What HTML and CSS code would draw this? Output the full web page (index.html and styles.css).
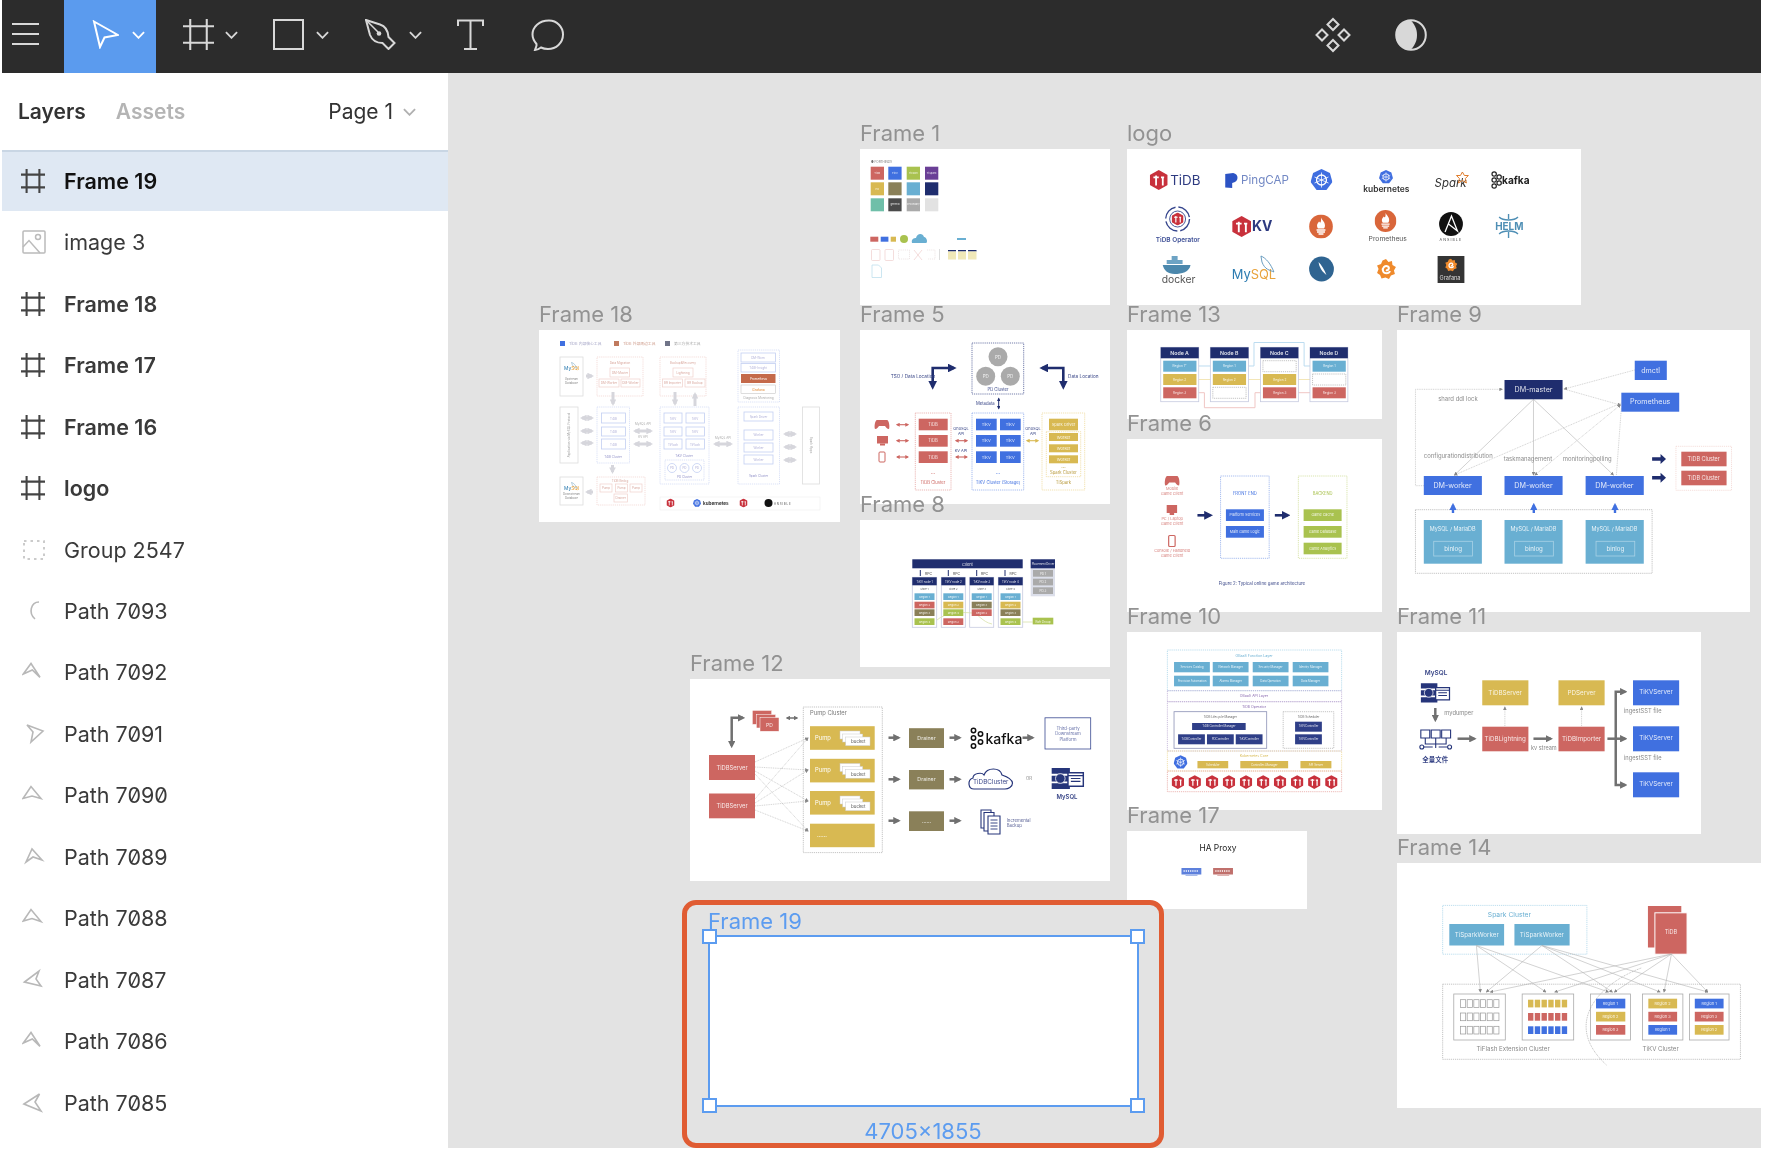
FILE: index.html
```html
<!DOCTYPE html>
<html lang="en">
<head>
  <meta charset="UTF-8" />
  <title>Figma - Layers</title>
  <link rel="stylesheet" href="styles.css">
</head>
<body>

  <!-- shared svg bits -->
  <svg class="defs" width="0" height="0">
    <defs>
      <marker id="m-navy" viewBox="0 0 10 10" refX="7" refY="5" markerWidth="3.400" markerHeight="3.400" orient="auto-start-reverse"><path d="M0 0L10 5L0 10z" fill="#1f2d6e"/></marker>
      <marker id="m-gray" viewBox="0 0 10 10" refX="7" refY="5" markerWidth="3" markerHeight="3" orient="auto-start-reverse"><path d="M0 0L10 5L0 10z" fill="#707070"/></marker>
      <marker id="m-red" viewBox="0 0 10 10" refX="7" refY="5" markerWidth="3.500" markerHeight="3.500" orient="auto-start-reverse"><path d="M0 0L10 5L0 10z" fill="#cd6661"/></marker>
      <marker id="m-yel" viewBox="0 0 10 10" refX="7" refY="5" markerWidth="3.500" markerHeight="3.500" orient="auto-start-reverse"><path d="M0 0L10 5L0 10z" fill="#d8b952"/></marker>
      <marker id="m-blue" viewBox="0 0 10 10" refX="7" refY="5" markerWidth="3" markerHeight="3" orient="auto-start-reverse"><path d="M0 0L10 5L0 10z" fill="#4070e0"/></marker>
      <marker id="m-pale" viewBox="0 0 10 10" refX="7" refY="5" markerWidth="2.200" markerHeight="2.200" orient="auto-start-reverse"><path d="M0 0L10 5L0 10z" fill="#d6d6dc"/></marker>
      <marker id="m-thin" viewBox="0 0 10 10" refX="8" refY="5" markerWidth="6" markerHeight="6" orient="auto-start-reverse"><path d="M0 0L10 5L0 10z" fill="#888"/></marker>

      <symbol id="s-frame" viewBox="0 0 30 30">
        <path d="M7 0V30M23 0V30M0 7H30M0 23H30" fill="none" stroke="currentColor"/>
      </symbol>
      <symbol id="s-chev" viewBox="0 0 14 8">
        <path d="M1 1L7 7L13 1" fill="none" stroke="currentColor" stroke-width="2"/>
      </symbol>
      <symbol id="s-hex" viewBox="0 0 20 22">
        <path d="M10 0L20 5.500V16.500L10 22L0 16.500V5.500z" fill="#c8313c"/>
        <path d="M4 8H10M7 6V17M12.500 8H16M14.500 8V17" fill="none" stroke="#fff" stroke-width="2"/>
      </symbol>
      <symbol id="s-k8s" viewBox="0 0 22 22">
        <path d="M11 0L19.500 4L22 13L16 21H6L0 13L2.500 4z" fill="#3f6ee0"/>
        <circle cx="11" cy="11" r="5" fill="none" stroke="#fff" stroke-width="1.300"/>
        <path d="M11 3.500V18.500M4 8L18 14M18 8L4 14" stroke="#fff" stroke-width=".8"/>
      </symbol>
      <symbol id="s-flame" viewBox="0 0 24 24">
        <circle cx="12" cy="12" r="12" fill="#d9663a"/>
        <path d="M12 3C13 6 16 7 16 11C16 13 15 14 15 14H9C9 14 8 13 8 11C8 9 9.500 8 10 7C11 8 11 8 11.500 8C12.500 6 12 4 12 3z" fill="#fff"/>
        <path d="M7.500 15.500H16.500M8 17.500H16M9.500 19.500H14.500" stroke="#fff" stroke-width="1.300"/>
      </symbol>
      <symbol id="s-swirl" viewBox="0 0 20 22">
        <path d="M10 1L12.500 4L16 3L16.500 7L20 9L18 12.500L19 16L15 17.500L13 21L9.500 19.500L5.500 20.500L4 17L1 15L2.500 11L1 7.500L5 6L6.500 2.500z" fill="#ef8a2c"/>
        <path d="M14 13C13 16 8 16 7 13C6 10 9 7 12 8.500C14 10 12 13 10 12" fill="none" stroke="#fff" stroke-width="2"/>
      </symbol>
      <symbol id="s-rack" viewBox="0 0 35 24">
        <path d="M1 1H20V7H1zM1 9H20V15H1zM1 17H20V23H1z" fill="#26357a"/>
        <path d="M18 6H34V20H18z" fill="#fff" stroke="#26357a" stroke-width="1.500"/>
        <path d="M18 9H34M21 12H31M21 15H31" stroke="#26357a" stroke-width="1.200"/>
        <circle cx="10" cy="12" r="5" fill="#26357a" stroke="#fff" stroke-width=".8"/>
      </symbol>
      <symbol id="s-mysql" viewBox="0 0 20 11">
        <path d="M10 0C13 1 16 4 17 8C15 7 12 6 11 3z" fill="none" stroke="#5b93b8" stroke-width=".6"/>
        <text x="0" y="10" font-size="6.500"><tspan fill="#2d7cb1">My</tspan><tspan fill="#e8a33d">SQL</tspan></text>
      </symbol>
    </defs>
  </svg>

  <div class="app">

    <!-- top bar -->
    <header class="toolbar">
      <button class="menu-btn">
        <svg class="ic" width="27" height="22" viewBox="0 0 27 22"><path d="M0 1H27M0 11H27M0 21H27" fill="none" stroke="currentColor" stroke-width="2"/></svg>
      </button>
      <button class="select-btn">
        <svg class="ic" width="27" height="29" viewBox="0 0 27 29"><path d="M2 1.500L26 15L12.500 17.500L8 27z" fill="none" stroke="currentColor" stroke-width="2"/></svg>
        <svg class="chev" width="13" height="8"><use href="#s-chev"/></svg>
      </button>
      <button class="tool tool-frame">
        <svg class="ic" width="31" height="31"><use href="#s-frame"/></svg>
        <svg class="chev" width="13" height="8"><use href="#s-chev"/></svg>
      </button>
      <button class="tool">
        <svg class="ic" width="31" height="31" viewBox="0 0 31 31"><rect x="1" y="1" width="29" height="29" fill="none" stroke="currentColor" stroke-width="2"/></svg>
        <svg class="chev" width="13" height="8"><use href="#s-chev"/></svg>
      </button>
      <button class="tool tool-pen">
        <svg class="ic" width="31" height="31" viewBox="0 0 31 31">
          <path d="M1 1L15 5.500C20 7 23 12 23.500 18L29.500 24L23.500 30L17.500 24C11 24 7 21 5 16z" fill="none" stroke="currentColor" stroke-width="2"/>
          <path d="M1 1L13 13" stroke="currentColor" stroke-width="1.500"/>
          <circle cx="14" cy="14.500" r="2.300" fill="currentColor"/>
        </svg>
        <svg class="chev" width="13" height="8"><use href="#s-chev"/></svg>
      </button>
      <button class="tool-plain">
        <svg class="ic" width="27" height="31" viewBox="0 0 27 31"><path d="M1 7V1.500H26V7M13.500 1.500V30M7 30H20" fill="none" stroke="currentColor" stroke-width="2"/></svg>
      </button>
      <button class="tool-plain tool-comment">
        <svg class="ic" width="35" height="32" viewBox="0 0 35 32"><path d="M5 31C6 28 7 27 6.500 25C4 22 2.500 19 2.500 15.500C2.500 8 9 1.500 19 1.500C27 1.500 33 8 33 15.500C33 24 26 30 18 30C15 30 13 29.500 11 28.500C9 30 7 31 5 31z" fill="none" stroke="currentColor" stroke-width="2"/></svg>
      </button>
      <div class="toolbar-right">
        <svg class="ic" width="36" height="36" viewBox="0 0 36 36">
          <path d="M18 2L23.500 7.500L18 13L12.500 7.500zM7 12.500L12.500 18L7 23.500L1.500 18zM29 12.500L34.500 18L29 23.500L23.500 18zM18 23L23.500 28.500L18 34L12.500 28.500z" fill="none" stroke="currentColor" stroke-width="2"/>
        </svg>
        <svg class="ic" width="32" height="32" viewBox="0 0 32 32">
          <circle cx="16" cy="16" r="14.800" fill="none" stroke="currentColor" stroke-width="2"/>
          <path d="M16 1.500C4 1.500 1 10 1 16C1 22 4 30.500 16 30.500C21 25 22 20 22 16C22 12 21 7 16 1.500z" fill="currentColor"/>
        </svg>
      </div>
    </header>

    <div class="workspace">

      <!-- layers panel -->
      <aside class="sidebar">
        <div class="tabs">
          <span class="tab tab-on">Layers</span>
          <span class="tab">Assets</span>
          <span class="page-pick">Page 1
            <svg width="13" height="8"><use href="#s-chev"/></svg>
          </span>
        </div>
        <ul class="layers">
          <li class="layer is-selected"><svg class="layer-ic frame-ic"><use href="#s-frame"/></svg>Frame 19</li>
          <li class="layer"><svg class="layer-ic" viewBox="0 0 24 24"><rect x="1" y="1" width="22" height="22" rx="1" fill="none" stroke="#bbb" stroke-width="1.500"/><circle cx="16" cy="7" r="2.500" fill="none" stroke="#bbb" stroke-width="1.500"/><path d="M1 17L7 10.500L18 23" fill="none" stroke="#bbb" stroke-width="1.500"/></svg>image 3</li>
          <li class="layer is-bold"><svg class="layer-ic frame-ic"><use href="#s-frame"/></svg>Frame 18</li>
          <li class="layer is-bold"><svg class="layer-ic frame-ic"><use href="#s-frame"/></svg>Frame 17</li>
          <li class="layer is-bold"><svg class="layer-ic frame-ic"><use href="#s-frame"/></svg>Frame 16</li>
          <li class="layer is-bold"><svg class="layer-ic frame-ic"><use href="#s-frame"/></svg>logo</li>
          <li class="layer"><svg class="layer-ic" viewBox="0 0 24 24"><rect x="2" y="3" width="20" height="18" fill="none" stroke="#bbb" stroke-width="1.500" stroke-dasharray="2.500 4"/></svg>Group 2547</li>
          <li class="layer"><svg class="layer-ic" viewBox="0 0 24 24"><path d="M17 3C9 3 6 14 13 20" class="p-ic"/></svg>Path 7093</li>
          <li class="layer"><svg class="layer-ic" viewBox="0 0 24 24"><path d="M1.300 14L9 3.500L18 17.300L10.300 10z" class="p-ic"/></svg>Path 7092</li>
          <li class="layer"><svg class="layer-ic" viewBox="0 0 24 24"><path d="M5 3L21 9L9 20L11 10z" class="p-ic"/></svg>Path 7091</li>
          <li class="layer"><svg class="layer-ic" viewBox="0 0 24 24"><path d="M1 15.500L9 3.500L19 15.500L10 13z" class="p-ic"/></svg>Path 7090</li>
          <li class="layer"><svg class="layer-ic" viewBox="0 0 24 24"><path d="M4 17L10 4L20 15L11 12z" class="p-ic"/></svg>Path 7089</li>
          <li class="layer"><svg class="layer-ic" viewBox="0 0 24 24"><path d="M1.300 15L9 3.500L19 15.500L10 12.500z" class="p-ic"/></svg>Path 7088</li>
          <li class="layer"><svg class="layer-ic" viewBox="0 0 24 24"><path d="M2.500 14L17 3L14 11L19 18z" class="p-ic"/></svg>Path 7087</li>
          <li class="layer"><svg class="layer-ic" viewBox="0 0 24 24"><path d="M1.300 14L9 3.500L18 17.300L10.300 10z" class="p-ic"/></svg>Path 7086</li>
          <li class="layer"><svg class="layer-ic" viewBox="0 0 24 24"><path d="M2 13L17.500 3L13 11L19 20z" class="p-ic"/></svg>Path 7085</li>
        </ul>
      </aside>

      <!-- canvas, frames sit where the user dropped them -->
      <main class="canvas">

        <section class="frame f1">
          <span class="frame-name">Frame 1</span>
          <svg class="thumb" preserveAspectRatio="none" viewBox="860 149 250 156">
            <text x="871" y="163" font-size="3" fill="#777">● FORTHINGS</text>
            <rect class="red" x="870.700" y="166.700" width="13.300" height="13"/><rect class="blue" x="888.300" y="166.700" width="13.300" height="13"/><rect class="grn" x="906.700" y="166.700" width="13.300" height="13"/><rect class="pur" x="925" y="166.700" width="13.300" height="13"/>
            <rect class="yel" x="870.700" y="182.300" width="13.300" height="13"/><rect class="olv" x="888.300" y="182.300" width="13.300" height="13"/><rect class="teal" x="906.700" y="182.300" width="13.300" height="13"/><rect class="navy" x="925" y="182.300" width="13.300" height="13"/>
            <rect class="mint" x="870.700" y="198.300" width="13.300" height="13"/><rect class="dark" x="888.300" y="198.300" width="13.300" height="13"/><rect class="gray" x="906.700" y="198.300" width="13.300" height="13"/><rect class="lgray" x="925" y="198.300" width="13.300" height="13"/>
            <g class="tw" font-size="2.600"><text x="877.300" y="174">TiDB</text><text x="895" y="174">TiKV</text><text x="913.300" y="174">TiFlash</text><text x="931.600" y="174">TiSpark</text><text x="877.300" y="189.500">PD</text><text x="895" y="205">general</text><text x="913.300" y="205">secondary</text></g>
            <rect class="red" x="870.300" y="236.700" width="8" height="5"/><rect class="blue" x="880.700" y="236.700" width="7.700" height="5"/><rect class="yel" x="890.700" y="236.700" width="5.300" height="5"/>
            <circle class="grn" cx="904" cy="239" r="4"/>
            <path class="teal" d="M912 243C911 239 914 238 916 238C917 233 923 233 924 237C927 237 928 243 926 243z"/>
            <rect class="teal" x="957" y="238" width="9" height="2"/>
            <g class="pale-red">
              <rect x="871.500" y="249.500" width="8.500" height="11" rx="1"/><rect x="885" y="249.500" width="8.500" height="11" rx="1"/>
              <path d="M914 250L922 260M922 250L914 260"/>
            </g>
            <rect class="d-pale" x="898.500" y="250" width="11" height="9"/>
            <path class="d-pale" d="M927 250H935V259H928"/>
            <path d="M939.500 249V260" stroke="#ddd"/>
            <g>
              <rect class="navy" x="948" y="250" width="8" height="1.500"/><rect class="navy" x="958" y="250" width="8" height="1.500"/><rect class="navy" x="968" y="250" width="8.500" height="1.500"/>
              <rect x="948" y="251.500" width="8" height="8" fill="#f0e8b8"/><rect x="958" y="251.500" width="8" height="8" fill="#f0e8b8"/><rect x="968" y="251.500" width="8.500" height="8" fill="#f0e8b8"/>
            </g>
            <path d="M872 265H878.500L881.500 268V277.500H872z" fill="none" stroke="#bfe0ee" stroke-width=".8"/>
          </svg>
        </section>

        <section class="frame f-logo">
          <span class="frame-name">logo</span>
          <svg class="thumb" preserveAspectRatio="none" viewBox="1127 149 457 156">
            <use href="#s-hex" x="1150" y="170" width="18" height="20"/>
            <text class="logo-navy" x="1170.500" y="185" font-size="13.500">TiDB</text>
            <path d="M1226 174L1234 173C1240 174 1240 182 1233 183V188L1226 187.500z" fill="#2c53c4"/>
            <text x="1242" y="184.500" font-size="11.700" fill="#7288c4">PingCAP</text>
            <use href="#s-k8s" x="1312" y="169" width="22" height="22"/>
            <use href="#s-k8s" x="1381" y="170" width="14" height="14"/>
            <text x="1365" y="192" font-size="8.500" font-weight="600" fill="#333">kubernetes</text>
            <text x="1437" y="187" font-size="11.500" font-style="italic" fill="#333">Spark</text>
            <path d="M1465 172L1467 175.500L1471 175.500L1468 178.500L1469 183L1465 180.500L1461 183L1462 178.500L1459 175.500L1463 175.500z" fill="none" stroke="#e07b2a"/>
            <g fill="none" stroke="#222" stroke-width="1.200"><circle cx="1497" cy="174" r="2.200"/><circle cx="1497" cy="180" r="2.200"/><circle cx="1497" cy="186" r="2.200"/><circle cx="1502" cy="177" r="2.200"/><circle cx="1502" cy="183" r="2.200"/></g>
            <text x="1505" y="184" font-size="10.200" font-weight="700" fill="#222">kafka</text>

            <circle cx="1178" cy="219" r="12" fill="none" stroke="#35458d" stroke-width="1.400" stroke-dasharray="16 3"/>
            <circle cx="1178" cy="219" r="8" fill="none" stroke="#35458d" stroke-width=".9"/>
            <use href="#s-hex" x="1172" y="212.500" width="12" height="13"/>
            <text x="1156" y="242" font-size="6.500" font-weight="600" fill="#3d4f96">TiDB Operator</text>
            <use href="#s-hex" x="1233" y="216" width="19" height="21"/>
            <text class="logo-navy" x="1253" y="231.500" font-size="14" font-weight="700">KV</text>
            <use href="#s-flame" x="1310.500" y="214.500" width="24" height="24"/>
            <use href="#s-flame" x="1376.500" y="210" width="22" height="22"/>
            <text x="1370.500" y="241" font-size="6.800" fill="#555">Prometheus</text>
            <circle cx="1453.500" cy="224" r="12" fill="#111"/>
            <path d="M1447.500 232L1454 216L1460 231L1451 224" fill="none" stroke="#fff" stroke-width="1.300"/>
            <text x="1442" y="241.500" font-size="3.800" letter-spacing="1" fill="#444">ANSIBLE</text>
            <text x="1498" y="230.500" font-size="10" font-weight="700" fill="#4f8fb5">HELM</text>
            <path d="M1502 217C1506 221 1517 221 1521 217M1511.500 214V219M1502 234C1506 230 1517 230 1521 234M1511.500 232V238" fill="none" stroke="#4f8fb5" stroke-width="1.400"/>

            <path d="M1163 265H1191C1190 272 1182 274 1175 274C1168 274 1164 270 1163 265z" fill="#4c88ad"/>
            <path d="M1167 260H1183V264H1167zM1172 256H1178V260H1172z" fill="#6da3c4"/>
            <text x="1162" y="283" font-size="10.400" fill="#555">docker</text>
            <text x="1232.500" y="279" font-size="13"><tspan fill="#2d7cb1">My</tspan><tspan fill="#e8a33d">SQL</tspan></text>
            <path d="M1262 256C1267 258 1272 264 1275 272C1271 270 1266 270 1263 262z" fill="none" stroke="#5b93b8" stroke-width=".9"/>
            <circle cx="1323" cy="269" r="12.500" fill="#2f6491"/>
            <path d="M1320 262C1323 265 1326 270 1328 275C1324 272 1321 268 1320 262z" fill="#fff"/>
            <use href="#s-swirl" x="1378" y="257" width="20" height="24"/>
            <rect x="1440" y="256" width="27" height="27" fill="#343434"/>
            <use href="#s-swirl" x="1447" y="258" width="13" height="14"/>
            <text x="1442" y="280" font-size="5.600" fill="#ddd">Grafana</text>
          </svg>
        </section>

        <section class="frame f18">
          <span class="frame-name">Frame 18</span>
          <svg class="thumb" preserveAspectRatio="none" viewBox="539 330 301 192">
            <rect class="blue" x="560" y="341" width="5" height="5"/><rect fill="#c07a5e" x="614" y="341" width="5" height="5"/><rect fill="#707488" x="665" y="341" width="5" height="5"/>
            <g font-size="3.800" fill="#a8a8c8"><text x="569" y="345">TiDB 内部核心工具</text><text x="623" y="345" fill="#d0a090">TiDB 外部周边工具</text><text x="674" y="345" fill="#aaa">第三方技术工具</text></g>

            <g class="b-gray">
              <rect x="560" y="357" width="23" height="39"/><rect x="560" y="407" width="18" height="56"/><rect x="560" y="477" width="23" height="28"/><rect x="802.500" y="407" width="17" height="77"/>
            </g>
            <use href="#s-mysql" x="564" y="362" width="15" height="9"/>
            <use href="#s-mysql" x="564" y="482" width="15" height="9"/>
            <g class="tm" font-size="2.900" fill="#888"><text x="571.500" y="380">Upstream</text><text x="571.500" y="384">Database</text><text x="571.500" y="494.500">Downstream</text><text x="571.500" y="498.500">Database</text></g>
            <text class="tm" font-size="3" fill="#999" transform="rotate(-90 569 435)" x="569" y="436">Application via MySQL Protocol</text>
            <text class="tm" font-size="3" fill="#999" transform="rotate(90 811 445)" x="811" y="446">Spark Apps</text>
            <g class="d-rose">
              <rect x="597" y="357" width="46" height="39"/><rect x="660" y="357" width="46" height="39"/><rect x="597" y="477" width="48" height="28"/>
            </g>
            <g class="b-rose">
              <rect x="610" y="368" width="19.500" height="9"/><rect x="599" y="379" width="20" height="8"/><rect x="621" y="379" width="19" height="8"/>
              <rect x="673" y="368" width="20" height="9"/><rect x="662.500" y="379" width="20" height="8"/><rect x="685" y="379" width="20" height="8"/>
              <rect x="600" y="484" width="12" height="8"/><rect x="615.500" y="484" width="12" height="8"/><rect x="630" y="484" width="12" height="8"/><rect x="614" y="494" width="13.500" height="8"/>
            </g>
            <g class="tm" font-size="3" fill="#d8a69c"><text x="620" y="363.500">Data Migration</text><text x="683" y="363.500">Backup&amp;Recovery</text><text x="620" y="481.500">TiDB Binlog</text><text x="620" y="373.500">DM-Master</text><text x="609" y="384">DM-Worker</text><text x="630.500" y="384">DM-Worker</text><text x="683" y="373.500">Lightning</text><text x="672.500" y="384">BR Importer</text><text x="695" y="384">BR Backup</text><text x="606" y="489">Pump</text><text x="621.500" y="489">Pump</text><text x="636" y="489">Pump</text><text x="620.700" y="499">Drainer</text></g>
            <g class="d-sky">
              <rect x="597" y="407" width="32.500" height="56"/><rect x="660" y="407" width="49" height="77"/><rect x="665" y="460" width="39" height="20"/><rect x="738" y="350" width="41.500" height="52"/><rect x="738" y="407" width="41.500" height="77"/>
            </g>
            <g class="b-sky">
              <rect x="601.500" y="413" width="24" height="10"/><rect x="601.500" y="427" width="24" height="9"/><rect x="601.500" y="439" width="24" height="10"/>
              <rect x="664" y="413" width="18" height="10"/><rect x="686" y="413" width="18.500" height="10"/><rect x="664" y="427" width="18" height="9"/><rect x="686" y="427" width="18.500" height="9"/><rect x="664" y="439" width="18" height="10"/><rect x="686" y="439" width="18.500" height="10"/>
              <circle cx="672" cy="468" r="4.500"/><circle cx="684.500" cy="468" r="4.500"/><circle cx="697" cy="468" r="4.500"/>
              <rect x="741" y="353" width="34.500" height="9"/><rect x="741" y="363.500" width="34.500" height="8.500"/>
              <rect x="744" y="412" width="29" height="9"/><rect x="744" y="430" width="29" height="10"/><rect x="744" y="443" width="29" height="9"/><rect x="744" y="455" width="29" height="9"/>
            </g>
            <rect x="741" y="374" width="34.500" height="9" fill="#c4694a"/>
            <rect x="741" y="385" width="34.500" height="8.500" fill="#fff" stroke="#bbb" stroke-width=".5"/>
            <g font-size="3" fill="#b0b0d8" text-anchor="middle"><text x="613.500" y="420">TiDB</text><text x="613.500" y="433">TiDB</text><text x="613.500" y="446">TiDB</text><text x="673" y="420">TiKV</text><text x="695" y="420">TiKV</text><text x="673" y="433">TiKV</text><text x="695" y="433">TiKV</text><text x="673" y="446">TiFlash</text><text x="695" y="446">TiFlash</text><text x="758.500" y="417.500">Spark Driver</text><text x="758.500" y="436">Worker</text><text x="758.500" y="449">Worker</text><text x="758.500" y="461">Worker</text><text x="758" y="359">DM-Worn</text><text x="758" y="369">TiDB-Insight</text><text x="613" y="458" fill="#9090c8">TiDB Cluster</text><text x="684" y="457" fill="#9090c8">TiKV Cluster</text><text x="758.500" y="477" fill="#9090c8">Spark Cluster</text><text x="684.500" y="477.500" fill="#9090c8">PD Cluster</text><text x="758.500" y="399" fill="#aaa">Diagnosis Monitoring</text><text x="672" y="469">PD</text><text x="684.500" y="469">PD</text><text x="697" y="469">PD</text></g>
            <g class="tm" font-size="3" fill="#aaa"><text x="643" y="425">MySQL API</text><text x="643" y="438">KV API</text><text x="723" y="439">MySQL API</text></g>
            <text x="758.500" y="380" font-size="3" fill="#fff" text-anchor="middle">Prometheus</text>
            <text x="758.500" y="391" font-size="3.300" fill="#e08a38" text-anchor="middle">Grafana</text>
            <g class="ar-pale">
              <path d="M613 392V404" marker-end="url(#m-pale)"/><path d="M675 392V404" marker-end="url(#m-pale)"/><path d="M695 406V394" marker-end="url(#m-pale)"/><path d="M612.500 465V472" marker-end="url(#m-pale)"/>
              <path d="M582 418H592" marker-start="url(#m-pale)" marker-end="url(#m-pale)"/><path d="M582 431H592" marker-start="url(#m-pale)" marker-end="url(#m-pale)"/><path d="M582 443H592" marker-start="url(#m-pale)" marker-end="url(#m-pale)"/>
              <path d="M635 431H651" marker-start="url(#m-pale)" marker-end="url(#m-pale)"/><path d="M635 444H651" marker-start="url(#m-pale)" marker-end="url(#m-pale)"/><path d="M715 444H731" marker-start="url(#m-pale)" marker-end="url(#m-pale)"/>
              <path d="M785 434H795" marker-start="url(#m-pale)" marker-end="url(#m-pale)"/><path d="M785 447H795" marker-start="url(#m-pale)" marker-end="url(#m-pale)"/><path d="M785 460H795" marker-start="url(#m-pale)" marker-end="url(#m-pale)"/>
              <path d="M593 492H587" marker-end="url(#m-pale)"/><path d="M586 376H592" marker-end="url(#m-pale)"/>
            </g>
            <rect x="660" y="497" width="160" height="13" fill="none" stroke="#eee" stroke-width=".6"/>
            <use href="#s-hex" x="666.500" y="498.500" width="8" height="9"/>
            <use href="#s-k8s" x="693" y="499" width="8" height="8"/>
            <text x="703" y="505" font-size="4.600" font-weight="700" fill="#333">kubernetes</text>
            <use href="#s-hex" x="739.500" y="498.500" width="8" height="9"/>
            <circle cx="768.500" cy="503" r="4" fill="#111"/>
            <text x="774" y="505" font-size="3" letter-spacing=".7" fill="#555">ANSIBLE</text>
          </svg>
        </section>

        <section class="frame f5">
          <span class="frame-name">Frame 5</span>
          <svg class="thumb" preserveAspectRatio="none" viewBox="860 330 250 174">
            <rect class="d-navy" x="972" y="343" width="51.700" height="51"/>
            <circle class="gray" cx="998" cy="356.700" r="9.500"/><circle class="gray" cx="985.700" cy="376.300" r="9.500"/><circle class="gray" cx="1010.300" cy="376.300" r="9.500"/>
            <g class="tw" font-size="4.500"><text x="998" y="358.500">PD</text><text x="985.700" y="378">PD</text><text x="1010.300" y="378">PD</text></g>
            <text class="tm t-navy" x="998" y="390.500" font-size="4.200">PD Cluster</text>
            <path class="ln-navy" d="M932.700 387V368H954" marker-start="url(#m-navy)" marker-end="url(#m-navy)"/>
            <path class="ln-navy" d="M1063.300 387V368H1042" marker-start="url(#m-navy)" marker-end="url(#m-navy)"/>
            <text class="t-navy" x="890.700" y="378" font-size="4.700">TSO / Data Location</text>
            <text class="t-navy" x="1068" y="378" font-size="4.700">Data Location</text>
            <text class="t-navy" x="976" y="404.500" font-size="4.200">Metadata</text>
            <path d="M998.700 398.500V408.500" stroke="#1f2d6e" stroke-width="1" marker-start="url(#m-navy)" marker-end="url(#m-navy)"/>

            <rect class="d-red" x="915.300" y="413" width="35.700" height="77"/>
            <rect class="red" x="918.700" y="418.700" width="29" height="11.600"/><rect class="red" x="918.700" y="435" width="29" height="11.700"/><rect class="red" x="918.700" y="451.300" width="29" height="11.700"/>
            <g class="tw" font-size="4.200"><text x="933" y="426">TiDB</text><text x="933" y="442">TiDB</text><text x="933" y="458.500">TiDB</text></g>
            <text class="tm t-red" x="933" y="474" font-size="5">...</text>
            <text class="tm t-red" x="933" y="484" font-size="4.200">TiDB Cluster</text>
            <g class="red-icons">
              <path d="M877 420H887C889 420 890 427 889 429C887 429 886 427 885 426H879C878 427 877 429 875 429C874 427 875 420 877 420z"/>
              <rect x="877" y="436" width="11" height="7.500"/><rect x="880" y="443.500" width="5" height="2"/>
              <rect x="879" y="452" width="6" height="10" rx="1" fill="#fff" stroke="#cd6661" stroke-width="1"/>
            </g>
            <g class="ar-red">
              <path d="M897 424.700H908" marker-start="url(#m-red)" marker-end="url(#m-red)"/><path d="M897 440.700H908" marker-start="url(#m-red)" marker-end="url(#m-red)"/><path d="M897 457H908" marker-start="url(#m-red)" marker-end="url(#m-red)"/>
              <path d="M956 440.700H967" marker-start="url(#m-red)" marker-end="url(#m-red)"/><path d="M956 457H967" marker-start="url(#m-red)" marker-end="url(#m-red)"/>
            </g>
            <g class="tm t-navy" font-size="3.900"><text x="961" y="429.500">OnoSQL</text><text x="961" y="434.500">API</text><text x="961" y="451.500">KV API</text><text x="1033" y="429.500">OnoSQL</text><text x="1033" y="434.500">API</text></g>

            <rect class="d-blue" x="972" y="413" width="51.700" height="77"/>
            <g class="blue">
              <rect x="976" y="418.700" width="20.700" height="11.600"/><rect x="1000" y="418.700" width="20.700" height="11.600"/><rect x="976" y="435" width="20.700" height="11.700"/><rect x="1000" y="435" width="20.700" height="11.700"/><rect x="976" y="451.300" width="20.700" height="11.700"/><rect x="1000" y="451.300" width="20.700" height="11.700"/>
            </g>
            <g class="tw" font-size="4"><text x="986.300" y="426">TiKV</text><text x="1010.300" y="426">TiKV</text><text x="986.300" y="442">TiKV</text><text x="1010.300" y="442">TiKV</text><text x="986.300" y="458.500">TiKV</text><text x="1010.300" y="458.500">TiKV</text></g>
            <text class="tm t-blue" x="998" y="474" font-size="5">...</text>
            <text class="tm t-blue" x="998" y="484" font-size="4.200">TiKV Cluster (Storage)</text>
            <path class="ar-yel" d="M1027 440.700H1038" marker-start="url(#m-yel)" marker-end="url(#m-yel)"/>

            <rect class="d-yel" x="1042" y="413" width="42.700" height="77"/>
            <rect class="yel" x="1049" y="418.700" width="29" height="11.600"/>
            <rect class="d-yel" x="1046.300" y="431.700" width="34.400" height="45"/>
            <rect class="yel" x="1049" y="433" width="29" height="8"/><rect class="yel" x="1049" y="444.300" width="29" height="8"/><rect class="yel" x="1049" y="455.300" width="29" height="8"/>
            <g class="tw" font-size="4"><text x="1063.500" y="426">Spark Driver</text><text x="1063.500" y="438.500">Worker</text><text x="1063.500" y="450">Worker</text><text x="1063.500" y="461">Worker</text></g>
            <text class="tm t-gold" x="1063.500" y="468" font-size="5">...</text>
            <text class="tm t-gold" x="1063.500" y="473.500" font-size="4.200">Spark Cluster</text>
            <text class="tm t-gold" x="1063.500" y="484" font-size="4.200">TiSpark</text>
          </svg>
        </section>

        <section class="frame f8">
          <span class="frame-name">Frame 8</span>
          <svg class="thumb" preserveAspectRatio="none" viewBox="860 520 250 147">
            <rect class="navy" x="912.300" y="559.300" width="110.400" height="9"/>
            <text class="tw" x="967.500" y="565.500" font-size="4">Client</text>
            <rect x="1030.700" y="559.300" width="24.300" height="37" fill="#dcdfea"/>
            <rect class="navy" x="1030.700" y="559.300" width="24.300" height="9"/>
            <text class="tw" x="1043" y="565" font-size="2.800">Placement Driver</text>
            <rect class="gray" x="1033" y="570" width="20" height="6.700"/><rect class="gray" x="1033" y="578.700" width="20" height="6.700"/><rect class="gray" x="1033" y="587.300" width="20" height="6.700"/>
            <g class="tw" font-size="3"><text x="1043" y="574.500">PD 1</text><text x="1043" y="583">PD 2</text><text x="1043" y="592">PD 3</text></g>
            <path d="M920.300 570V576M948.300 570V576M976.700 570V576M1005 570V576" stroke="#1f2d6e"/>
            <g font-size="3.500" fill="#444"><text x="925" y="574.500">RPC</text><text x="953" y="574.500">RPC</text><text x="981" y="574.500">RPC</text><text x="1009.500" y="574.500">RPC</text></g>
            <g class="node">
              <rect x="912.300" y="577.300" width="24.400" height="50"/><rect x="941.300" y="577.300" width="24" height="50"/><rect x="969.700" y="577.300" width="24" height="50"/><rect x="998.300" y="577.300" width="24.400" height="50"/>
            </g>
            <rect class="navy" x="912.300" y="577.300" width="24.400" height="8"/><rect class="navy" x="941.300" y="577.300" width="24" height="8"/><rect class="navy" x="969.700" y="577.300" width="24" height="8"/><rect class="navy" x="998.300" y="577.300" width="24.400" height="8"/>
            <g class="tw" font-size="2.900"><text x="924.500" y="582.500">TiKV node 1</text><text x="953.300" y="582.500">TiKV node 2</text><text x="981.700" y="582.500">TiKV node 3</text><text x="1010.500" y="582.500">TiKV node 4</text></g>
            <g class="tm" font-size="2.600" fill="#555"><text x="924.500" y="590">Store 1</text><text x="953.300" y="590">Store 2</text><text x="981.700" y="590">Store 3</text><text x="1010.500" y="590">Store 4</text></g>
            <path d="M937 620C946 612 962 612 972 613C978 613 982 622 992 624" class="ln-green"/>
            <path d="M1022.700 622H1032.700" class="ln-green"/>
            <rect class="teal" x="914.500" y="593.300" width="20" height="6.700"/><rect class="red" x="914.500" y="601.700" width="20" height="6.700"/><rect class="olv" x="914.500" y="609.300" width="20" height="6.700"/><rect class="grn" x="914.500" y="618.300" width="20" height="6.700"/>
            <rect class="teal" x="943.300" y="593.300" width="20" height="6.700"/><rect class="yel" x="943.300" y="601.700" width="20" height="6.700"/><rect class="grn" x="943.300" y="609.300" width="20" height="6.700"/><rect class="red" x="943.300" y="618.300" width="20" height="6.700"/>
            <rect class="teal" x="971.700" y="593.300" width="20" height="6.700"/><rect class="olv" x="971.700" y="601.700" width="20" height="6.700"/><rect class="red" x="971.700" y="609.300" width="20" height="6.700"/>
            <rect class="teal" x="1000.500" y="593.300" width="20" height="6.700"/><rect class="yel" x="1000.500" y="601.700" width="20" height="6.700"/><rect class="olv" x="1000.500" y="609.300" width="20" height="6.700"/><rect class="grn" x="1000.500" y="618.300" width="20" height="6.700"/>
            <g class="tw" font-size="2.700"><text x="924.500" y="598">Region 1</text><text x="924.500" y="606">Region 2</text><text x="924.500" y="614">Region 3</text><text x="924.500" y="623">Region 4</text><text x="953.300" y="598">Region 1</text><text x="953.300" y="606">Region 2</text><text x="953.300" y="614">Region 4</text><text x="953.300" y="623">Region 2</text><text x="981.700" y="598">Region 1</text><text x="981.700" y="606">Region 3</text><text x="981.700" y="614">Region 2</text><text x="1010.500" y="598">Region 1</text><text x="1010.500" y="606">Region 2</text><text x="1010.500" y="614">Region 3</text><text x="1010.500" y="623">Region 4</text></g>
            <rect class="grn" x="1032.700" y="617.700" width="20.600" height="6.700"/>
            <text class="tw" x="1043" y="622.500" font-size="3">Raft Group</text>
          </svg>
        </section>

        <section class="frame f13">
          <span class="frame-name">Frame 13</span>
          <svg class="thumb" preserveAspectRatio="none" viewBox="1127 330 257 89">
            <path d="M1170 366H1230M1240 366H1255V342.500H1305.500V366H1325" fill="none" stroke="#bcdcf0" stroke-width="1"/>
            <path d="M1170 379.500H1340" fill="none" stroke="#f3e6b8" stroke-width="1"/>
            <path d="M1190 392.700H1205V407.700H1256V392.700H1330" fill="none" stroke="#f0c6c4" stroke-width="1"/>
            <g class="node">
              <rect x="1161" y="347.300" width="38.300" height="54.400"/><rect x="1211" y="347.300" width="38.500" height="54.400"/><rect x="1261.500" y="347.300" width="38.200" height="54.400"/><rect x="1311.400" y="347.300" width="38.200" height="54.400"/>
            </g>
            <rect class="navy" x="1161" y="347.300" width="38.300" height="11"/><rect class="navy" x="1211" y="347.300" width="38.500" height="11"/><rect class="navy" x="1261.500" y="347.300" width="38.200" height="11"/><rect class="navy" x="1311.400" y="347.300" width="38.200" height="11"/>
            <g class="tw" font-size="5.300" font-weight="600"><text x="1180" y="355">Node A</text><text x="1230" y="355">Node B</text><text x="1280.500" y="355">Node C</text><text x="1330.500" y="355">Node D</text></g>
            <rect class="teal" x="1163.500" y="360.700" width="33.500" height="11"/><rect class="yel" x="1163.500" y="374" width="33.500" height="11"/><rect class="red" x="1163.500" y="387.300" width="33.500" height="11"/>
            <rect class="teal" x="1213.500" y="360.700" width="33.500" height="11"/><rect class="yel" x="1213.500" y="374" width="33.500" height="11"/><rect class="d-gray" x="1213.500" y="387.300" width="33.500" height="11"/>
            <rect class="d-gray" x="1264" y="360.700" width="33.500" height="11"/><rect class="yel" x="1264" y="374" width="33.500" height="11"/><rect class="red" x="1264" y="387.300" width="33.500" height="11"/>
            <rect class="teal" x="1314" y="360.700" width="33.500" height="11"/><rect class="d-gray" x="1314" y="374" width="33.500" height="11"/><rect class="red" x="1314" y="387.300" width="33.500" height="11"/>
            <g class="tw" font-size="3.200"><text x="1180" y="367.500">Region 1*</text><text x="1180" y="381">Region 2</text><text x="1180" y="394">Region 3</text><text x="1230" y="367.500">Region 1</text><text x="1230" y="381">Region 2</text><text x="1281" y="381">Region 2</text><text x="1281" y="394">Region 3</text><text x="1331" y="367.500">Region 1</text><text x="1331" y="394">Region 3</text></g>
          </svg>
        </section>

        <section class="frame f6">
          <span class="frame-name">Frame 6</span>
          <svg class="thumb" preserveAspectRatio="none" viewBox="1127 439 257 173">
            <g class="red-icons">
              <path d="M1167.500 476H1177.500C1179.500 476 1180.500 483 1179.500 485.500C1177.500 485.500 1176.500 483.500 1175.500 482.500H1169.500C1168.500 483.500 1167.500 485.500 1165.500 485.500C1164.500 483 1165.500 476 1167.500 476z"/>
              <rect x="1167" y="505" width="10.500" height="8"/><rect x="1170" y="513" width="4.500" height="2"/>
              <rect x="1169" y="535.500" width="6.500" height="11" rx="1" fill="#fff" stroke="#cd6661" stroke-width="1.200"/>
            </g>
            <g class="tm" font-size="3.900" fill="#d88581"><text x="1172.500" y="490.500">Mobile</text><text x="1172.500" y="495">Game Client</text><text x="1172.500" y="520.500">PC / Laptop</text><text x="1172.500" y="525.500">Game Client</text><text x="1172.500" y="552">Console / Handheld</text><text x="1172.500" y="557">Game Client</text></g>
            <path class="ln-navy" d="M1198 515.300H1211" marker-end="url(#m-navy)"/>
            <path class="ln-navy" d="M1276 515.300H1289" marker-end="url(#m-navy)"/>
            <rect class="d-blue" x="1221.300" y="476" width="49" height="82.300"/>
            <text class="tm t-blue" x="1245.800" y="495" font-size="4.200">FRONT END</text>
            <rect class="blue" x="1226.700" y="509.300" width="38.300" height="11.700"/><rect class="blue" x="1226.700" y="526" width="38.300" height="11.700"/>
            <g class="tw" font-size="3.700"><text x="1245.800" y="516.500">Platform Services</text><text x="1245.800" y="533.500">Main Game Logic</text></g>
            <rect class="d-grn" x="1299.700" y="476" width="49" height="82.300"/>
            <text class="tm t-grn" x="1324.200" y="495" font-size="4.200">BACKEND</text>
            <rect class="grn" x="1305" y="509.300" width="38.300" height="11.700"/><rect class="grn" x="1305" y="526" width="38.300" height="11.700"/><rect class="grn" x="1305" y="542.700" width="38.300" height="11.600"/>
            <g class="tw" font-size="3.700"><text x="1324.200" y="516.500">Game Cache</text><text x="1324.200" y="533.500">Game Database</text><text x="1324.200" y="550">Game Analytics</text></g>
            <text class="t-navy" x="1219.500" y="585" font-size="4.400">Figure 2: Typical online game architecture</text>
          </svg>
        </section>

        <section class="frame f9">
          <span class="frame-name">Frame 9</span>
          <svg class="thumb" preserveAspectRatio="none" viewBox="1399 330 356 282">
            <path class="ln-thin-d" d="M1426 485.700H1417.600V389.300H1505" marker-end="url(#m-thin)"/>
            <path class="ln-thin-d" d="M1638.500 370L1567.500 389" marker-end="url(#m-thin)"/>
            <path class="ln-thin-d" d="M1567 389L1624 405" marker-end="url(#m-thin)"/>
            <path class="ln-thin-d" d="M1625 403L1457 475" marker-end="url(#m-thin)"/>
            <path class="ln-thin-d" d="M1538 475L1624 405" marker-start="url(#m-thin)" marker-end="url(#m-thin)"/>
            <path class="ln-thin-d" d="M1620 475L1625 408"/>
            <path class="ln-thin" d="M1536.500 399.300L1457 475" marker-end="url(#m-thin)"/>
            <path class="ln-thin" d="M1536.500 399.300V475" marker-end="url(#m-thin)"/>
            <path class="ln-thin" d="M1536.500 399.300L1617 475" marker-end="url(#m-thin)"/>
            <rect class="navy" x="1507.300" y="380" width="58.500" height="19.300"/>
            <rect class="blue" x="1638.500" y="360.700" width="32.300" height="19.300"/>
            <rect class="blue" x="1625" y="392.700" width="58.300" height="19"/>
            <rect class="blue" x="1426" y="476" width="58.500" height="19"/><rect class="blue" x="1507.300" y="476" width="58.500" height="19"/><rect class="blue" x="1589" y="476" width="58.600" height="19"/>
            <g class="tw" font-size="7.200"><text x="1536.500" y="392">DM-master</text><text x="1654.500" y="373">dmctl</text><text x="1654" y="404.500">Prometheus</text><text x="1455" y="488">DM-worker</text><text x="1536.500" y="488">DM-worker</text><text x="1618" y="488">DM-worker</text></g>
            <g font-size="6" fill="#8c8c8c"><text x="1440.500" y="401.500">shard ddl lock</text><text x="1426" y="458.500">configurationdistribution</text><text x="1506.500" y="461.500">taskmanagement</text><text x="1566" y="461.500">monitoringpolling</text></g>
            <rect class="d-gray" x="1417.600" y="509.700" width="238.400" height="63.600"/>
            <rect class="teal" x="1426" y="520" width="58.500" height="43.700"/><rect class="teal" x="1507.300" y="520" width="58.500" height="43.700"/><rect class="teal" x="1589" y="520" width="58.600" height="43.700"/>
            <g class="tw" font-size="5.500"><text x="1455" y="531.500">MySQL / MariaDB</text><text x="1536.500" y="531.500">MySQL / MariaDB</text><text x="1618" y="531.500">MySQL / MariaDB</text></g>
            <g class="b-white"><rect x="1436" y="541.300" width="39" height="14.700"/><rect x="1517.500" y="541.300" width="39" height="14.700"/><rect x="1599.500" y="541.300" width="39" height="14.700"/></g>
            <g class="tw" font-size="6.200"><text x="1455.500" y="551">binlog</text><text x="1537" y="551">binlog</text><text x="1619" y="551">binlog</text></g>
            <path class="ln-blue" d="M1455.400 513V505" marker-end="url(#m-blue)"/><path class="ln-blue" d="M1536.800 513V505" marker-end="url(#m-blue)"/><path class="ln-blue" d="M1618.600 513V505" marker-end="url(#m-blue)"/>
            <path class="navy" d="M1656 457.300H1664.500V454L1670 459L1664.500 464V460.700H1656z"/>
            <path class="navy" d="M1656 476H1664.500V472.700L1670 477.700L1664.500 482.700V479.400H1656z"/>
            <rect class="d-rose" x="1680" y="446.300" width="56" height="44"/>
            <rect class="red" x="1685.400" y="451.700" width="45.600" height="14.600"/><rect class="red" x="1685.400" y="470.700" width="45.600" height="14.600"/>
            <g class="tw" font-size="5.500"><text x="1708" y="461">TiDB Cluster</text><text x="1708" y="480">TiDB Cluster</text></g>
          </svg>
        </section>

        <section class="frame f10">
          <span class="frame-name">Frame 10</span>
          <svg class="thumb" preserveAspectRatio="none" viewBox="1127 632 257 178">
            <rect class="d-sky2" x="1167.700" y="650" width="175.600" height="40.700"/>
            <rect class="d-pur" x="1167.700" y="690.700" width="175.600" height="11"/>
            <rect class="d-pur" x="1167.700" y="701.700" width="175.600" height="49.300"/>
            <rect class="d-yel" x="1167.700" y="751" width="175.600" height="20"/>
            <rect class="d-red" x="1167.700" y="771" width="175.600" height="20.700"/>
            <g class="tm" font-size="3.600"><text x="1255" y="657.500" fill="#69afd2">OBaaS Function Layer</text><text x="1255" y="697.500" fill="#8a6bb0">OBaaS API Layer</text><text x="1255" y="708" fill="#8a6bb0">TiDB Operator</text><text x="1255" y="757" fill="#d8b952">Kubernetes Core</text></g>
            <g class="teal">
              <rect x="1174.400" y="662" width="36.100" height="10.300"/><rect x="1213.400" y="662" width="36.100" height="10.300"/><rect x="1253.700" y="662" width="36.100" height="10.300"/><rect x="1294" y="662" width="36" height="10.300"/>
              <rect x="1174.400" y="675.700" width="36.100" height="10.600"/><rect x="1213.400" y="675.700" width="36.100" height="10.600"/><rect x="1253.700" y="675.700" width="36.100" height="10.600"/><rect x="1294" y="675.700" width="36" height="10.600"/>
            </g>
            <g class="tw" font-size="2.900"><text x="1192.500" y="668">Services Catalog</text><text x="1231.500" y="668">Network Manager</text><text x="1271.700" y="668">Security Manager</text><text x="1312" y="668">Identity Manager</text><text x="1192.500" y="682">Provision Automation</text><text x="1231.500" y="682">Alarms Manager</text><text x="1271.700" y="682">Data Operation</text><text x="1312" y="682">Data Manager</text></g>
            <rect x="1174.400" y="711.700" width="93.400" height="36.600" fill="none" stroke="#8a8fb4" stroke-width=".8"/>
            <rect class="d-gray" x="1284.400" y="711.700" width="51" height="36.600"/>
            <g class="tm" font-size="3" fill="#666"><text x="1221" y="718.500">TiDB Lifecycle Manager</text><text x="1310" y="718">TiDB Scheduler</text></g>
            <g class="navy2">
              <rect x="1192.600" y="723" width="54" height="7"/><rect x="1178.500" y="734.300" width="27" height="10"/><rect x="1207.600" y="734.300" width="27" height="10"/><rect x="1236.600" y="734.300" width="27" height="10"/><rect x="1296.400" y="721.700" width="27" height="10"/><rect x="1296.400" y="734.300" width="27" height="10"/>
            </g>
            <g class="tw" font-size="2.900"><text x="1219.600" y="727.500">TiDB Controller Manager</text><text x="1192" y="740">TiDBController</text><text x="1221" y="740">PDController</text><text x="1250" y="740">TiKVController</text><text x="1310" y="727.500">TiKVController</text><text x="1310" y="740">TiKVController</text></g>
            <use href="#s-k8s" x="1174" y="755" width="14" height="14.500"/>
            <rect class="yel" x="1198" y="761" width="31" height="7.300"/><rect class="yel" x="1241.200" y="761" width="48.200" height="7.300"/><rect class="yel" x="1301.800" y="761" width="31.200" height="7.300"/>
            <g class="tw" font-size="2.900"><text x="1213.500" y="765.700">Scheduler</text><text x="1265.300" y="765.700">Controller-Manager</text><text x="1317.400" y="765.700">API Server</text></g>
            <use href="#s-hex" x="1172" y="775" width="12.500" height="14"/><use href="#s-hex" x="1189" y="775" width="12.500" height="14"/><use href="#s-hex" x="1206.500" y="775" width="12.500" height="14"/><use href="#s-hex" x="1223.500" y="775" width="12.500" height="14"/><use href="#s-hex" x="1240.700" y="775" width="12.500" height="14"/><use href="#s-hex" x="1258" y="775" width="12.500" height="14"/><use href="#s-hex" x="1275" y="775" width="12.500" height="14"/><use href="#s-hex" x="1292.300" y="775" width="12.500" height="14"/><use href="#s-hex" x="1309.500" y="775" width="12.500" height="14"/><use href="#s-hex" x="1326.700" y="775" width="12.500" height="14"/>
          </svg>
        </section>

        <section class="frame f17">
          <span class="frame-name">Frame 17</span>
          <svg class="thumb" preserveAspectRatio="none" viewBox="1127 831 181 78">
            <text x="1200" y="851" font-size="8.500" fill="#222">HA Proxy</text>
            <rect x="1181.900" y="868" width="20" height="6.500" fill="#5d80dc"/><rect x="1186" y="874.500" width="12" height="1.500" fill="#a9bbea"/>
            <rect x="1213.800" y="868" width="20" height="6.500" fill="#c0706c"/><rect x="1218" y="874.500" width="12" height="1.500" fill="#e0b4b2"/>
            <path d="M1184 871H1199M1216 871H1231" stroke="#fff" stroke-width="1.500" stroke-dasharray="1.200 1"/>
          </svg>
        </section>

        <section class="frame f11">
          <span class="frame-name">Frame 11</span>
          <svg class="thumb" preserveAspectRatio="none" viewBox="1399 632 306 202">
            <text class="t-navy" x="1427" y="675" font-size="6.500" font-weight="600">MySQL</text>
            <use href="#s-rack" x="1422" y="682.300" width="31" height="21"/>
            <path class="ln-gray" d="M1437.600 708V720" marker-end="url(#m-gray)"/>
            <text x="1446.700" y="715.500" font-size="5.800" fill="#888">mydumper</text>
            <g fill="none" stroke="#26357a" stroke-width="1.100">
              <path d="M1423 730H1432V738H1423zM1433.500 730H1442.500V738H1433.500zM1444 730H1453V738H1444z"/>
              <path d="M1427.500 738V744H1448.500V738M1438 738V748M1426 747H1435M1441 747H1450"/>
              <circle cx="1424" cy="747" r="2"/><circle cx="1452" cy="747" r="2"/>
            </g>
            <text class="tm t-navy" x="1437.500" y="762.500" font-size="6.500" font-weight="600">全量文件</text>
            <rect class="yel" x="1484.900" y="680.300" width="46.500" height="25"/><rect class="yel" x="1561.700" y="680.300" width="46.500" height="25"/>
            <rect class="red" x="1484.900" y="726.700" width="46.500" height="24.600"/><rect class="red" x="1561.700" y="726.700" width="46.500" height="24.600"/>
            <rect class="blue" x="1636.800" y="680.300" width="46.500" height="25"/><rect class="blue" x="1636.800" y="726.300" width="46.500" height="25"/><rect class="blue" x="1636.800" y="772.300" width="46.500" height="25"/>
            <g class="tw" font-size="6.300"><text x="1508" y="695">TiDBServer</text><text x="1585" y="695">PDServer</text><text x="1508" y="741">TiDBLightning</text><text x="1585" y="741">TiDBImporter</text><text x="1660" y="694.500">TiKVServer</text><text x="1660" y="740.500">TiKVServer</text><text x="1660" y="786.500">TiKVServer</text></g>
            <path class="ln-thin-d" d="M1507.700 726V707" marker-end="url(#m-thin)"/><path class="ln-thin-d" d="M1585 726V707" marker-end="url(#m-thin)"/>
            <path class="ln-gray" d="M1460 738.700H1477" marker-end="url(#m-gray)"/><path class="ln-gray" d="M1536.500 738.700H1554" marker-end="url(#m-gray)"/>
            <text x="1534" y="750" font-size="5.600" fill="#888">kv stream</text>
            <path class="ln-gray" d="M1611 738.700H1629" marker-end="url(#m-gray)"/>
            <path class="ln-gray" d="M1629 691.700H1619.400V785H1629" marker-start="url(#m-gray)" marker-end="url(#m-gray)"/>
            <g font-size="5.800" fill="#888"><text x="1627.700" y="713.500">ingestSST file</text><text x="1627.700" y="760">ingestSST file</text></g>
          </svg>
        </section>

        <section class="frame f14">
          <span class="frame-name">Frame 14</span>
          <svg class="thumb" preserveAspectRatio="none" viewBox="1399 863 366.700 245">
            <rect class="d-sky2" x="1445" y="905.400" width="145.300" height="48.800"/>
            <text class="tm" x="1512.300" y="917.500" font-size="6.800" fill="#69afd2">Spark Cluster</text>
            <rect class="teal" x="1451.700" y="924" width="55.200" height="21.500"/><rect class="teal" x="1517.300" y="924" width="55.600" height="21.500"/>
            <g class="tw" font-size="6.300"><text x="1479.300" y="937">TiSparkWorker</text><text x="1545" y="937">TiSparkWorker</text></g>
            <rect class="red" x="1651.800" y="906" width="33.600" height="41.500"/>
            <rect class="red b-frontred" x="1658.800" y="912.800" width="32.400" height="41.400"/>
            <text class="tw" x="1675" y="934.500" font-size="5.600">TiDB</text>
            <g class="ln-fine">
              <path d="M1479 945.500L1483 992" marker-end="url(#m-thin)"/><path d="M1479 945.500L1549 992" marker-end="url(#m-thin)"/><path d="M1479 945.500L1612 992" marker-end="url(#m-thin)"/>
              <path d="M1545 945.500L1489 992" marker-end="url(#m-thin)"/><path d="M1545 945.500L1616 992" marker-end="url(#m-thin)"/><path d="M1545 945.500L1664 992" marker-end="url(#m-thin)"/><path d="M1545 945.500L1712 992" marker-end="url(#m-thin)"/>
              <path d="M1675.500 954L1493 992" marker-end="url(#m-thin)"/><path d="M1675.500 954L1558 992" marker-end="url(#m-thin)"/><path d="M1675.500 954L1618 992" marker-end="url(#m-thin)"/><path d="M1675.500 954L1668 992" marker-end="url(#m-thin)"/><path d="M1675.500 954L1712 992" marker-end="url(#m-thin)"/>
            </g>
            <rect class="d-gray" x="1445" y="984.200" width="300" height="75.100"/>
            <g class="box-white">
              <rect x="1456.200" y="994" width="51.900" height="46"/><rect x="1525.100" y="994" width="51.900" height="46"/><rect x="1594" y="994" width="40.300" height="46"/><rect x="1646.400" y="994" width="40.600" height="46"/><rect x="1693.700" y="994" width="39.800" height="46"/>
            </g>
            <g class="cell-empty">
              <rect x="1463" y="999.700" width="5.200" height="7.700"/><rect x="1469.700" y="999.700" width="5.200" height="7.700"/><rect x="1476.400" y="999.700" width="5.200" height="7.700"/><rect x="1483.100" y="999.700" width="5.200" height="7.700"/><rect x="1489.800" y="999.700" width="5.200" height="7.700"/><rect x="1496.500" y="999.700" width="5.200" height="7.700"/>
              <rect x="1463" y="1013" width="5.200" height="7.700"/><rect x="1469.700" y="1013" width="5.200" height="7.700"/><rect x="1476.400" y="1013" width="5.200" height="7.700"/><rect x="1483.100" y="1013" width="5.200" height="7.700"/><rect x="1489.800" y="1013" width="5.200" height="7.700"/><rect x="1496.500" y="1013" width="5.200" height="7.700"/>
              <rect x="1463" y="1026.300" width="5.200" height="7.700"/><rect x="1469.700" y="1026.300" width="5.200" height="7.700"/><rect x="1476.400" y="1026.300" width="5.200" height="7.700"/><rect x="1483.100" y="1026.300" width="5.200" height="7.700"/><rect x="1489.800" y="1026.300" width="5.200" height="7.700"/><rect x="1496.500" y="1026.300" width="5.200" height="7.700"/>
            </g>
            <g class="yel"><rect x="1531" y="999.700" width="5.400" height="7.700"/><rect x="1537.800" y="999.700" width="5.400" height="7.700"/><rect x="1544.600" y="999.700" width="5.400" height="7.700"/><rect x="1551.400" y="999.700" width="5.400" height="7.700"/><rect x="1558.200" y="999.700" width="5.400" height="7.700"/><rect x="1565" y="999.700" width="5.400" height="7.700"/></g>
            <g class="red"><rect x="1531" y="1013" width="5.400" height="7.700"/><rect x="1537.800" y="1013" width="5.400" height="7.700"/><rect x="1544.600" y="1013" width="5.400" height="7.700"/><rect x="1551.400" y="1013" width="5.400" height="7.700"/><rect x="1558.200" y="1013" width="5.400" height="7.700"/><rect x="1565" y="1013" width="5.400" height="7.700"/></g>
            <g class="blue"><rect x="1531" y="1026.300" width="5.400" height="7.700"/><rect x="1537.800" y="1026.300" width="5.400" height="7.700"/><rect x="1544.600" y="1026.300" width="5.400" height="7.700"/><rect x="1551.400" y="1026.300" width="5.400" height="7.700"/><rect x="1558.200" y="1026.300" width="5.400" height="7.700"/><rect x="1565" y="1026.300" width="5.400" height="7.700"/></g>
            <rect class="blue" x="1599.500" y="998.700" width="29.500" height="9.700"/><rect class="yel" x="1599.500" y="1011.800" width="29.500" height="9.700"/><rect class="red" x="1599.500" y="1025" width="29.500" height="9.700"/>
            <rect class="yel" x="1652.200" y="998.700" width="29" height="9.700"/><rect class="red" x="1652.200" y="1011.800" width="29" height="9.700"/><rect class="blue" x="1652.200" y="1025" width="29" height="9.700"/>
            <rect class="blue" x="1699" y="998.700" width="29" height="9.700"/><rect class="red" x="1699" y="1011.800" width="29" height="9.700"/><rect class="yel" x="1699" y="1025" width="29" height="9.700"/>
            <g class="tw" font-size="3.900"><text x="1614" y="1005">Region 1</text><text x="1614" y="1018">Region 2</text><text x="1614" y="1031.500">Region 3</text><text x="1666.500" y="1005">Region 2</text><text x="1666.500" y="1018">Region 3</text><text x="1666.500" y="1031.500">Region 1</text><text x="1713.500" y="1005">Region 1</text><text x="1713.500" y="1018">Region 3</text><text x="1713.500" y="1031.500">Region 2</text></g>
            <path d="M1645 968C1600 985 1566 1025 1610 1065" fill="none" stroke="#999" stroke-width=".6" stroke-dasharray="1 .8"/>
            <g font-size="6.200" fill="#888"><text x="1479" y="1051">TiFlash Extension Cluster</text><text x="1646.400" y="1051">TiKV Cluster</text></g>
          </svg>
        </section>

        <section class="frame f12">
          <span class="frame-name">Frame 12</span>
          <svg class="thumb" preserveAspectRatio="none" viewBox="690 680 420 202">
            <rect class="red b-front" x="752.300" y="711.400" width="19.400" height="14"/><rect class="red b-front" x="756.300" y="715.500" width="19.400" height="13.500"/><rect class="red b-front" x="760" y="718.500" width="19" height="13.800"/>
            <text class="tw" x="769.500" y="727.500" font-size="5">PD</text>
            <path class="ln-gray" d="M731.700 747V718.800H743" marker-start="url(#m-gray)" marker-end="url(#m-gray)"/>
            <path d="M787 719H797" stroke="#707070" stroke-width="1.500" marker-start="url(#m-gray)" marker-end="url(#m-gray)"/>
            <g class="ln-thin-d">
              <path d="M755 763L808 739" marker-end="url(#m-thin)"/><path d="M755 768L808 771" marker-end="url(#m-thin)"/><path d="M755 772L808 802" marker-end="url(#m-thin)"/><path d="M755 775L808 832" marker-end="url(#m-thin)"/>
              <path d="M755 800L808 739" marker-end="url(#m-thin)"/><path d="M755 804L808 771" marker-end="url(#m-thin)"/><path d="M755 807L808 802" marker-end="url(#m-thin)"/><path d="M755 811L808 832" marker-end="url(#m-thin)"/>
            </g>
            <rect class="red" x="709" y="756" width="46" height="25"/><rect class="red" x="709" y="794.500" width="46" height="24.800"/>
            <g class="tw" font-size="5.800"><text x="732" y="770.500">TiDBServer</text><text x="732" y="809">TiDBServer</text></g>
            <rect class="d-gray" x="803.300" y="708" width="79" height="145.600"/>
            <text x="810" y="716" font-size="5.800" fill="#777">Pump Cluster</text>
            <rect class="yel" x="810" y="727.200" width="64.700" height="23.600"/><rect class="yel" x="810" y="759.800" width="64.700" height="23.600"/><rect class="yel" x="810" y="792" width="64.700" height="23.600"/><rect class="yel" x="810" y="824.700" width="64.700" height="23.500"/>
            <g font-size="5.800" fill="#fff"><text x="815" y="740.500">Pump</text><text x="815" y="773">Pump</text><text x="815" y="805.500">Pump</text><text x="817" y="838">......</text></g>
            <g class="bucket">
              <rect x="840" y="732" width="20" height="8"/><rect x="842.700" y="735" width="20" height="8"/><rect x="845.700" y="738" width="24.300" height="8.700"/>
              <rect x="840" y="764.500" width="20" height="8"/><rect x="842.700" y="767.500" width="20" height="8"/><rect x="845.700" y="770.500" width="24.300" height="8.700"/>
              <rect x="840" y="797" width="20" height="8"/><rect x="842.700" y="800" width="20" height="8"/><rect x="845.700" y="803" width="24.300" height="8.700"/>
            </g>
            <g font-size="4.500" fill="#555"><text x="851" y="744">bucket</text><text x="851" y="776.500">bucket</text><text x="851" y="809">bucket</text></g>
            <path class="ln-gray" d="M888.500 738.700H898.500" marker-end="url(#m-gray)"/><path class="ln-gray" d="M888.500 780.300H898.500" marker-end="url(#m-gray)"/><path class="ln-gray" d="M888.500 821.700H898.500" marker-end="url(#m-gray)"/>
            <rect class="olv" x="909" y="729.200" width="35" height="19.800"/><rect class="olv" x="909" y="771" width="35" height="19.400"/><rect class="olv" x="909" y="812.300" width="35" height="19.700"/>
            <g class="tw" font-size="5.300"><text x="926.500" y="740.700">Drainer</text><text x="926.500" y="782.300">Drainer</text><text x="926.500" y="824">......</text></g>
            <path class="ln-gray" d="M949.500 738.700H959.500" marker-end="url(#m-gray)"/><path class="ln-gray" d="M949.500 780.300H959.500" marker-end="url(#m-gray)"/><path class="ln-gray" d="M949.500 821.700H959.500" marker-end="url(#m-gray)"/>
            <g fill="none" stroke="#111" stroke-width="1.500"><circle cx="973.500" cy="731.500" r="2.200"/><circle cx="973.500" cy="739" r="2.200"/><circle cx="973.500" cy="747" r="2.200"/><circle cx="980.500" cy="735" r="2.200"/><circle cx="980.500" cy="743" r="2.200"/></g>
            <text x="985.500" y="744.500" font-size="14" font-weight="500" fill="#111">kafka</text>
            <path class="ln-gray" d="M1022.500 738.700H1032.500" marker-end="url(#m-gray)"/>
            <rect x="1045" y="718.800" width="45.700" height="31.200" fill="#fff" stroke="#3a4a92" stroke-width=".8"/>
            <g class="tm" font-size="4.300" fill="#6670a8"><text x="1068" y="730.500">Third-party</text><text x="1068" y="736">Downstream</text><text x="1068" y="741.500">Platform</text></g>
            <path d="M974 790C968 790 967 781 973 779C973 774 982 773 984 776C987 768 1000 768 1002 776C1005 777 1012 780 1012.500 784C1012.500 788 1008 790 1005 790z" fill="#fff" stroke="#26357a" stroke-width="1.200"/>
            <text class="t-navy" x="973" y="785" font-size="6.300">TiDBCluster</text>
            <text class="tm" x="1029" y="781" font-size="4.300" fill="#888">OR</text>
            <use href="#s-rack" x="1050" y="768" width="35" height="23"/>
            <text class="tm t-navy" x="1067" y="800" font-size="6" font-weight="600">MySQL</text>
            <g fill="#fff" stroke="#26357a" stroke-width="1.100">
              <path d="M981 811H991V829H981z"/><path d="M984 813.500H994V832H984z"/><path d="M988 817H1000V835H988z"/>
            </g>
            <path d="M990.500 821H997.500M990.500 824H997.500M990.500 827H997.500M990.500 830H997.500" stroke="#26357a" stroke-width=".9"/>
            <g font-size="4.300" fill="#5a6296"><text x="1006.700" y="823">Incremental</text><text x="1006.700" y="828">Backup</text></g>
          </svg>
        </section>

        <!-- the marked up frame -->
        <section class="callout">
          <span class="sel-name">Frame 19</span>
          <div class="sel-box">
            <i class="grip grip-tl"></i><i class="grip grip-tr"></i><i class="grip grip-bl"></i><i class="grip grip-br"></i>
          </div>
          <span class="sel-size">4705×1855</span>
        </section>

      </main>
    </div>
  </div>

</body>
</html>
```

FILE: styles.css
```css
html, body {
  margin: 0;
  height: 100%;
  background: #fff;
}

body {
  font-family: Inter, "Noto Sans", sans-serif;
  color: #333;
  overflow: hidden;
}

.defs {
  position: absolute;
}

/* the source is an upscaled screenshot, everything is a little soft */
.app {
  width: 1759px;
  height: 1148px;
  margin-left: 2px;
  display: flex;
  flex-direction: column;
  filter: blur(.4px);
}

/* top bar */
.toolbar {
  height: 73px;
  flex-shrink: 0;
  background: #2c2c2c;
  display: flex;
  align-items: center;
  color: #d8d8d8;
  stroke-width: 2;
}

.toolbar button {
  border: 0;
  background: none;
  color: inherit;
  padding: 0 0 4px;
  height: 100%;
  display: flex;
  align-items: center;
  box-sizing: border-box;
}

.ic {
  flex-shrink: 0;
}

.toolbar .menu-btn {
  width: 62px;
  padding: 0 0 6px 10px;
}

.toolbar .select-btn {
  width: 92px;
  background: #5b9bee;
  color: #fff;
  padding-left: 28px;
  gap: 13px;
}

.toolbar .tool {
  width: 90px;
  padding-left: 27px;
  gap: 12px;
}

.toolbar .tool-frame {
  gap: 11px;
}

.toolbar .tool-pen {
  padding-left: 29px;
  width: 93px;
  gap: 13px;
}

.toolbar .tool-plain {
  width: 101px;
  padding-left: 28px;
}

.toolbar .tool-comment {
  padding-left: 0;
  width: 35px;
}

.toolbar-right {
  margin-left: 749.500px;
  padding-bottom: 4px;
  display: flex;
  align-items: center;
  gap: 44px;
}

/* panel */
.workspace {
  flex: 1;
  display: flex;
  min-height: 0;
}

.sidebar {
  width: 446px;
  flex-shrink: 0;
  background: #fff;
}

.tabs {
  height: 77px;
  display: flex;
  align-items: center;
  padding: 0 32px 0 16px;
  gap: 30px;
  font-size: 21px;
}

.tab {
  font-weight: 600;
  color: #b4b4b4;
}

.tab-on {
  color: #333;
}

.page-pick {
  margin-left: auto;
  display: flex;
  align-items: center;
  gap: 10px;
  color: #333;
}

.page-pick svg {
  color: #b0b0b0;
}

.layers {
  list-style: none;
  margin: 0;
  padding: 0;
}

.layer {
  height: 61.47px;
  box-sizing: border-box;
  display: flex;
  align-items: center;
  padding-left: 20px;
  gap: 18px;
  font-size: 21.500px;
  color: #3a3a3a;
  font-variant-numeric: slashed-zero;
}

.is-selected {
  background: #dfe8f3;
  border-top: 2px solid #c9d6e4;
  padding-bottom: 2px;
  font-weight: 600;
  color: #111;
}

.is-bold {
  font-weight: 600;
}

.layer-ic {
  width: 24px;
  height: 24px;
  flex-shrink: 0;
}

.frame-ic {
  color: #444;
  stroke-width: 2.600;
  transform: translateX(-1px);
}

.p-ic {
  fill: none;
  stroke: #b8b8b8;
  stroke-width: 1.600;
}

/* canvas */
.canvas {
  flex: 1;
  position: relative;
  background: #e3e3e3;
  overflow: hidden;
}

.frame {
  position: absolute;
  background: #fff;
}

.frame-name {
  position: absolute;
  left: 0;
  bottom: 100%;
  margin-bottom: 3px;
  font-size: 22px;
  line-height: 26px;
  color: #929292;
  white-space: nowrap;
}

.f1 { left: 412px; top: 76px; width: 250px; height: 156px; }
.f-logo { left: 679px; top: 76px; width: 453.500px; height: 156px; }
.f18 { left: 91px; top: 257px; width: 301px; height: 192px; }
.f5 { left: 412px; top: 257px; width: 250px; height: 174px; }
.f8 { left: 412px; top: 447px; width: 250px; height: 147px; }
.f13 { left: 679px; top: 257px; width: 255px; height: 89px; }
.f6 { left: 679px; top: 366px; width: 255px; height: 173px; }
.f9 { left: 949px; top: 257px; width: 353.400px; height: 282px; }
.f10 { left: 679px; top: 559px; width: 255px; height: 178px; }
.f17 { left: 679px; top: 758px; width: 179.600px; height: 78px; }
.f11 { left: 949px; top: 559px; width: 303.700px; height: 202px; }
.f14 { left: 949px; top: 790px; width: 364px; height: 245px; }
.f12 { left: 242px; top: 606px; width: 420px; height: 202px; }

.thumb {
  display: block;
  width: 100%;
  height: 100%;
  font-family: Inter, "Noto Sans CJK SC", sans-serif;
}

.red { fill: #cd6661; }
.blue { fill: #4070e0; }
.yel { fill: #d8b952; }
.teal { fill: #69afd2; }
.navy { fill: #1f2d6e; }
.navy2 { fill: #2f3f88; }
.grn { fill: #a9c24f; }
.olv { fill: #8a8059; }
.pur { fill: #6a3f96; }
.mint { fill: #6fbfa9; }
.dark { fill: #4a4a4a; }
.gray { fill: #aaa; }
.lgray { fill: #e2e2e2; }

.tw { fill: #fff; text-anchor: middle; opacity: .85; }
.tm { text-anchor: middle; }
.logo-navy { fill: #2d3a80; }
.t-navy { fill: #3a4788; }
.t-red { fill: #cd6661; }
.t-blue { fill: #4070e0; }
.t-gold { fill: #b89a3c; }
.t-grn { fill: #a9c24f; }

.d-navy, .d-red, .d-blue, .d-yel, .d-grn, .d-gray, .d-pale, .d-rose, .d-rose rect, .d-sky, .d-sky rect, .d-sky2, .d-pur {
  fill: none;
  stroke-width: .7;
  stroke-dasharray: 1.200 .9;
}

.d-navy { stroke: #3a4788; }
.d-red { stroke: #e39a96; }
.d-blue { stroke: #7f9fe8; }
.d-yel { stroke: #ecd68e; }
.d-grn { stroke: #c9da8a; }
.d-gray { stroke: #aaa; }
.d-pale { stroke: #e8dcdc; }
.d-rose { stroke: #f0d0cb; }
.d-sky { stroke: #cbd6f4; }
.d-sky2 { stroke: #9fd0e6; }
.d-pur { stroke: #b7a4d0; }

.b-gray rect { fill: #fff; stroke: #ddd; stroke-width: .8; }
.b-rose rect { fill: #fff; stroke: #f0d0cb; stroke-width: .7; }
.b-sky rect, .b-sky circle { fill: #fff; stroke: #c3cff2; stroke-width: .8; }
.b-white rect { fill: none; stroke: #a8d2e6; stroke-width: .8; }
.b-front { stroke: #fff; stroke-width: .5; }
.b-frontred { stroke: #fff; stroke-width: 1; }

.pale-red rect, .pale-red path { fill: none; stroke: #efcfcd; stroke-width: .7; }
.red-icons { fill: #cd6661; }

.node rect { fill: #fff; stroke: #c6cae0; stroke-width: .8; }
.box-white rect { fill: #fff; stroke: #aaa; stroke-width: .8; }
.cell-empty rect { fill: #fff; stroke: #999; stroke-width: .7; }
.bucket rect { fill: #fff; stroke: #ccc; stroke-width: .5; }

.ln-navy { fill: none; stroke: #1f2d6e; stroke-width: 2.600; }
.ln-blue { fill: none; stroke: #4070e0; stroke-width: 2.400; }
.ln-gray { fill: none; stroke: #707070; stroke-width: 2.500; }
.ln-green { fill: none; stroke: #d8e2aa; stroke-width: .8; }
.ln-thin, .ln-fine path { fill: none; stroke: #b4b4b4; stroke-width: .6; }
.ln-thin-d, .ln-thin-d path { fill: none; stroke: #b4b4b4; stroke-width: .6; stroke-dasharray: 1 .8; }
.ar-pale path { fill: none; stroke: #d6d6dc; stroke-width: 3; }
.ar-red path { fill: none; stroke: #cd6661; stroke-width: 1.100; }
.ar-yel { fill: none; stroke: #d8b952; stroke-width: 1.100; }

/* red box drawn over the screenshot */
.callout {
  position: absolute;
  left: 234px;
  top: 827px;
  width: 482px;
  height: 248px;
  box-sizing: border-box;
  border: 5.500px solid #e05c33;
  border-radius: 14px;
  background: #e3e3e3;
  color: #5c9cf0;
}

.sel-name {
  position: absolute;
  left: 21px;
  top: 2px;
  font-size: 22px;
  line-height: 28px;
}

.sel-box {
  position: absolute;
  left: 21px;
  top: 30px;
  width: 431px;
  height: 172px;
  box-sizing: border-box;
  background: #fff;
  border: 2px solid #5c9cf0;
}

.grip {
  position: absolute;
  width: 15px;
  height: 15px;
  box-sizing: border-box;
  background: #fff;
  border: 2.500px solid #5c9cf0;
}

.grip-tl { left: -8px; top: -8px; }
.grip-tr { right: -8px; top: -8px; }
.grip-bl { left: -8px; bottom: -8px; }
.grip-br { right: -8px; bottom: -8px; }

.sel-size {
  position: absolute;
  left: 0;
  right: 0;
  top: 212px;
  text-align: center;
  font-size: 22px;
  line-height: 28px;
}
```
